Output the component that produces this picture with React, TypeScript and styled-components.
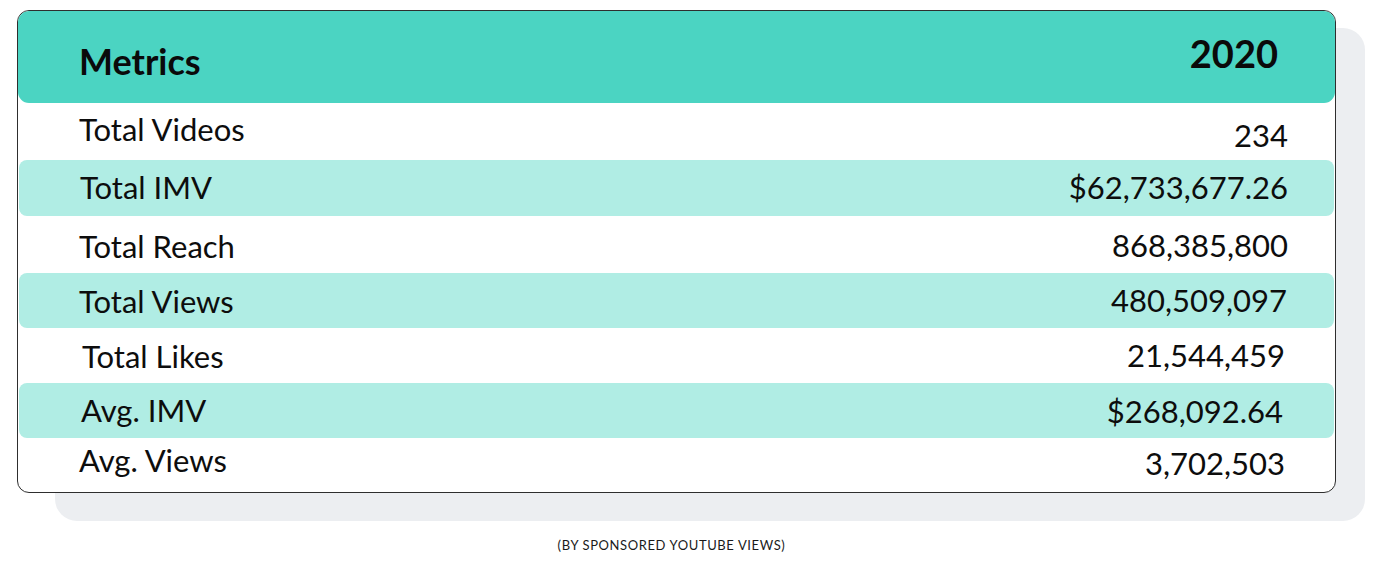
import React from "react";
import styled, { createGlobalStyle, css } from "styled-components";

const GlobalStyle = createGlobalStyle`
  body {
    margin: 0;
    background: #ffffff;
    font-family: "Lato", "Liberation Sans", sans-serif;
    color: #111;
  }
`;

const shiftY = (dy: number) => css`
  padding-top: ${dy > 0 ? dy * 2 : 0}px;
  padding-bottom: ${dy < 0 ? -dy * 2 : 0}px;
`;

const Page = styled.div`
  padding: 10px 0 0 17px;
  width: 1319px;
  display: flex;
  flex-direction: column;
  align-items: center;
`;

const Stage = styled.div`
  position: relative;
  width: 1319px;
`;

const Backdrop = styled.div`
  position: absolute;
  left: 38px;
  top: 18px;
  width: 1310px;
  height: 493px;
  background: #eceef1;
  border-radius: 22px;
  z-index: 0;
`;

const Card = styled.div`
  position: relative;
  z-index: 1;
  box-sizing: border-box;
  height: 483px;
  border: 1px solid #2e2e2e;
  border-radius: 12px;
  background: #ffffff;
  display: flex;
  flex-direction: column;
  overflow: hidden;
`;

const Header = styled.div`
  height: 92px;
  flex: none;
  background: #4bd4c2;
  border-radius: 11px;
  display: flex;
  align-items: center;
  justify-content: space-between;
  padding: 0 57px 0 61px;
`;

const HeaderCell = styled.div<{ $size: number; $dy: number }>`
  font-weight: 700;
  font-size: ${(p) => p.$size}px;
  line-height: 1.2;
  color: #0a0a0a;
  ${(p) => shiftY(p.$dy)}
`;

const Body = styled.div`
  flex: 1;
  display: flex;
  flex-direction: column;
`;

const Row = styled.div<{ $shade: boolean; $h: number }>`
  height: ${(p) => p.$h}px;
  flex: none;
  display: flex;
  align-items: center;
  justify-content: space-between;
  margin: 0 1px;
  border-radius: 8px;
  background: ${(p) => (p.$shade ? "#b0ede4" : "transparent")};
  padding: 0 46px 0 60px;
`;

const Cell = styled.div<{ $dy: number; $dx: number }>`
  font-size: 31px;
  line-height: 1.2;
  color: #0d0d0d;
  ${(p) => shiftY(p.$dy)}
  margin-left: ${(p) => (p.$dx > 0 ? p.$dx : 0)}px;
  margin-right: ${(p) => (p.$dx < 0 ? -p.$dx : 0)}px;
`;

const Caption = styled.div`
  margin-top: 44px;
  margin-right: 10px;
  font-size: 13px;
  letter-spacing: 0.6px;
  color: #1a1a1a;
  text-transform: uppercase;
`;

type Metric = {
  label: string;
  value: string;
  h: number;
  ly: number;
  lx: number;
  vy: number;
  vx: number;
};

const metrics: Metric[] = [
  { label: "Total Videos", value: "234", h: 57, ly: -2, lx: 0, vy: 4, vx: 0 },
  { label: "Total IMV", value: "$62,733,677.26", h: 56, ly: 0, lx: 1, vy: 0, vx: 0 },
  { label: "Total Reach", value: "868,385,800", h: 57, ly: 2, lx: 0, vy: 1, vx: 0 },
  { label: "Total Views", value: "480,509,097", h: 55, ly: 1, lx: 0, vy: 0, vx: -1 },
  { label: "Total Likes", value: "21,544,459", h: 55, ly: 1, lx: 3, vy: 0, vx: -3 },
  { label: "Avg. IMV", value: "$268,092.64", h: 55, ly: 0, lx: 2, vy: 1, vx: -5 },
  { label: "Avg. Views", value: "3,702,503", h: 54, ly: -4, lx: 0, vy: -1, vx: -3 },
];

export default function App() {
  return (
    <>
      <GlobalStyle />
      <Page>
        <Stage>
          <Backdrop />
          <Card>
            <Header>
              <HeaderCell $size={36} $dy={5}>
                Metrics
              </HeaderCell>
              <HeaderCell $size={38} $dy={-3}>
                2020
              </HeaderCell>
            </Header>
            <Body>
              {metrics.map((m, i) => (
                <Row key={m.label} $shade={i % 2 === 1} $h={m.h}>
                  <Cell $dy={m.ly} $dx={m.lx}>
                    {m.label}
                  </Cell>
                  <Cell $dy={m.vy} $dx={m.vx}>
                    {m.value}
                  </Cell>
                </Row>
              ))}
            </Body>
          </Card>
        </Stage>
        <Caption>(By sponsored YouTube views)</Caption>
      </Page>
    </>
  );
}
